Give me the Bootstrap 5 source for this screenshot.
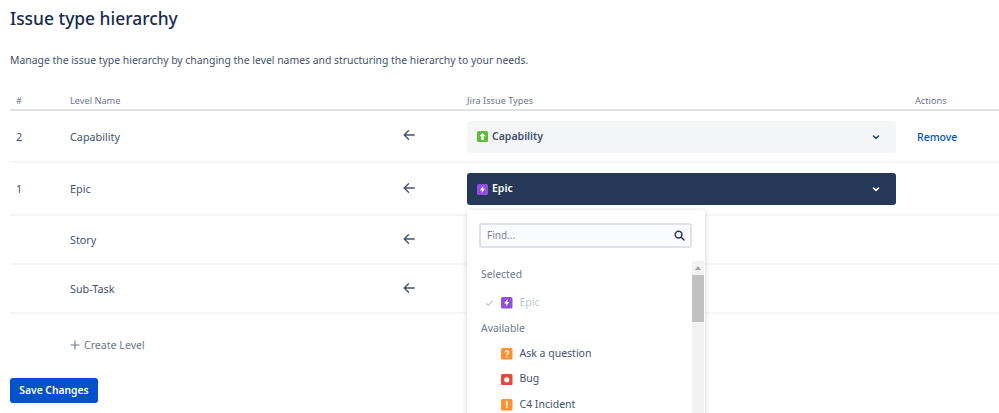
<!DOCTYPE html>
<html lang="en">
<head>
<meta charset="utf-8">
<title>Issue type hierarchy</title>
<link href="https://cdn.jsdelivr.net/npm/bootstrap@5.3.0/dist/css/bootstrap.min.css" rel="stylesheet">
<style>
html,body{height:413px;overflow:hidden;background:#fff}
body{font-family:"Noto Sans","Open Sans","Liberation Sans",sans-serif;font-size:10.5px;color:#42526e}
.page-wrap{padding:0 0 0 10px;position:relative;height:413px;overflow:hidden}
.page-title{font-size:17.4px;font-weight:500;color:#172b4d;line-height:24px;margin:0;padding-top:6px}
.page-desc{font-size:10.4px;line-height:16px;color:#42526e;margin:0;padding-top:22px}
.hier-table{table-layout:fixed;width:989px;margin:18px 0 0;border-collapse:collapse}
.hier-table th{font-size:9.2px;font-weight:400;color:#6b778c;height:24px;padding:6px 0 0;border-bottom:2px solid #dfe1e6;vertical-align:middle}
.hier-table td{padding:1px 0 0;border-bottom:2px solid #f4f5f7;vertical-align:middle;color:#42526e;font-size:10.8px}
.hier-table td,.hier-table th{background:transparent}
.hier-table td.text-low{padding-top:3px}
.col-num{padding-left:6px!important}
.r-a{height:52px}.r-b{height:53px}.r-c{height:49px}.r-d{height:49px}
.arrow-wrap{display:flex;justify-content:center;margin-bottom:3px}
.type-sel{display:flex;align-items:center;width:429px;height:32px;border-radius:3px;background:#f4f5f7;color:#42526e;font-weight:600;font-size:10.5px;padding:0 15px 0 10px;gap:4px}
.type-sel.is-open{background:#253858;color:#fff}
.remove-link{color:#0052cc;text-decoration:none;font-weight:500;font-size:10.5px;margin-left:2px}
.ico{width:11px;height:11px;flex:none;display:block}
.menu-opt .ico{width:11.5px;height:11.5px}
.create-row{display:flex;align-items:center;gap:4px;margin:23px 0 0 60px;color:#6b778c;font-size:10.6px;line-height:16px}
.save-btn{display:block;margin-top:25px;background:#0052cc;border:0;color:#fff;font-weight:600;font-size:10.3px;width:88px;height:25px;padding:0;border-radius:3px}
.type-menu{position:absolute;left:466.5px;top:210px;width:238.5px;height:240px;background:#fff;border-radius:3px;box-shadow:0 1px 5px rgba(9,30,66,.22);padding:13px 0 0}
.find-box{display:flex;align-items:center;justify-content:space-between;margin:0 13px 0 12.5px;height:25px;border:2px solid #dfe1e6;border-radius:3px;padding:0 5px 0 6px;background:#fafbfc;color:#7a869a;font-size:10px}
.menu-body{position:relative;height:190px;margin-top:13px;padding:5px 12px 0 0}
.menu-track{position:absolute;right:1px;top:0;width:12px;height:100%;background:#f1f1f1}
.menu-thumb{position:absolute;left:0;top:14px;width:100%;height:47px;background:#c1c1c1}
.menu-caret{position:absolute;left:3px;top:5px;width:0;height:0;border:3px solid transparent;border-bottom:4px solid #a3a3a3;border-top:0}
.menu-head{color:#6b778c;font-size:10.4px;line-height:16px;padding-left:14.5px}
.menu-head.avail-head{margin-bottom:5px}
.menu-opt{display:flex;align-items:center;height:25.5px;padding-left:34.5px;gap:7px;color:#42526e;font-size:10.5px}
.menu-opt.is-sel{color:#c1c7d0;position:relative;height:26px;margin:8px 0 4px}
.sel-check{position:absolute;left:18.5px;top:9px}
</style>
</head>
<body>
<div class="page-wrap">
  <h1 class="page-title">Issue type hierarchy</h1>
  <p class="page-desc">Manage the issue type hierarchy by changing the level names and structuring the hierarchy to your needs.</p>

  <table class="table hier-table">
    <colgroup><col style="width:60px"><col style="width:310px"><col style="width:58px"><col style="width:29px"><col style="width:448px"><col></colgroup>
    <thead>
      <tr><th class="col-num">#</th><th>Level Name</th><th></th><th></th><th>Jira Issue Types</th><th>Actions</th></tr>
    </thead>
    <tbody>
      <tr class="r-a">
        <td class="col-num text-low">2</td><td class="text-low">Capability</td>
        <td><div class="arrow-wrap"><svg width="12" height="12" viewBox="0 0 12 12" fill="none" stroke="#42526e" stroke-width="1.4" stroke-linecap="round" stroke-linejoin="round"><path d="M1.2 6h10M5.5 1.8 1.2 6l4.3 4.2"/></svg></div></td><td></td>
        <td><div class="type-sel"><svg class="ico" viewBox="0 0 11 11"><rect width="11" height="11" rx="1.5" fill="#63ba3c"/><path d="M5.5 2 2.5 5.3h1.8V9h2.4V5.3h1.8z" fill="#fff"/></svg><span class="flex-grow-1">Capability</span><svg width="10" height="10" viewBox="0 0 10 10" fill="none" stroke="#344563" stroke-width="1.6" stroke-linecap="round" stroke-linejoin="round"><path d="M2.5 4 5 6.3 7.5 4"/></svg></div></td>
        <td class="text-low"><a class="remove-link" href="#">Remove</a></td>
      </tr>
      <tr class="r-b">
        <td class="col-num">1</td><td>Epic</td>
        <td><div class="arrow-wrap"><svg width="12" height="12" viewBox="0 0 12 12" fill="none" stroke="#42526e" stroke-width="1.4" stroke-linecap="round" stroke-linejoin="round"><path d="M1.2 6h10M5.5 1.8 1.2 6l4.3 4.2"/></svg></div></td><td></td>
        <td><div class="type-sel is-open"><svg class="ico" viewBox="0 0 11 11"><rect width="11" height="11" rx="1.5" fill="#904ee2"/><path d="M6.2 2 3 6.2h2L4.6 9 8 4.8H6z" fill="#fff"/></svg><span class="flex-grow-1">Epic</span><svg width="10" height="10" viewBox="0 0 10 10" fill="none" stroke="#fff" stroke-width="1.6" stroke-linecap="round" stroke-linejoin="round"><path d="M2.5 4 5 6.3 7.5 4"/></svg></div></td>
        <td></td>
      </tr>
      <tr class="r-c">
        <td></td><td>Story</td>
        <td><div class="arrow-wrap"><svg width="12" height="12" viewBox="0 0 12 12" fill="none" stroke="#42526e" stroke-width="1.4" stroke-linecap="round" stroke-linejoin="round"><path d="M1.2 6h10M5.5 1.8 1.2 6l4.3 4.2"/></svg></div></td><td></td><td></td><td></td>
      </tr>
      <tr class="r-d">
        <td></td><td>Sub-Task</td>
        <td><div class="arrow-wrap"><svg width="12" height="12" viewBox="0 0 12 12" fill="none" stroke="#42526e" stroke-width="1.4" stroke-linecap="round" stroke-linejoin="round"><path d="M1.2 6h10M5.5 1.8 1.2 6l4.3 4.2"/></svg></div></td><td></td><td></td><td></td>
      </tr>
    </tbody>
  </table>

  <div class="create-row"><svg width="10" height="10" viewBox="0 0 10 10" fill="none" stroke="#6b778c" stroke-width="1.1"><path d="M5 .5v9M.5 5h9"/></svg><span>Create Level</span></div>
  <button type="button" class="btn save-btn">Save Changes</button>

  <div class="type-menu">
    <div class="find-box"><span>Find...</span><svg width="11" height="11" viewBox="0 0 11 11" fill="none" stroke="#253858" stroke-width="1.5" stroke-linecap="round"><circle cx="4.6" cy="4.6" r="3.4"/><path d="m7.3 7.3 2.6 2.6"/></svg></div>
    <div class="menu-body">
      <div class="menu-track"><div class="menu-caret"></div><div class="menu-thumb"></div></div>
      <div class="menu-head">Selected</div>
      <div class="menu-opt is-sel"><svg class="sel-check" width="9" height="8" viewBox="0 0 9 8" fill="none" stroke="#c1c7d0" stroke-width="1.2"><path d="m1 4.2 2.3 2.3L8 1.5"/></svg><svg class="ico" viewBox="0 0 11 11"><rect width="11" height="11" rx="1.5" fill="#904ee2"/><path d="M6.2 2 3 6.2h2L4.6 9 8 4.8H6z" fill="#fff"/></svg><span>Epic</span></div>
      <div class="menu-head avail-head">Available</div>
      <div class="menu-opt"><svg class="ico" viewBox="0 0 11 11"><rect width="11" height="11" rx="1.5" fill="#ff8f33"/><path d="M3.9 4.2c0-2.1 3.3-2.1 3.3-.1 0 1.3-1.6 1.3-1.6 2.6" fill="none" stroke="#fff" stroke-width="1.2"/><rect x="5" y="7.6" width="1.2" height="1.3" fill="#fff"/></svg><span>Ask a question</span></div>
      <div class="menu-opt"><svg class="ico" viewBox="0 0 11 11"><rect width="11" height="11" rx="1.5" fill="#e5493a"/><circle cx="5.5" cy="5.5" r="2.5" fill="#fff"/></svg><span>Bug</span></div>
      <div class="menu-opt"><svg class="ico" viewBox="0 0 11 11"><rect width="11" height="11" rx="1.5" fill="#ff8f33"/><rect x="4.7" y="2" width="1.6" height="4.6" fill="#fff"/><rect x="4.7" y="7.5" width="1.6" height="1.5" fill="#fff"/></svg><span>C4 Incident</span></div>
    </div>
  </div>
</div>
<script src="https://cdn.jsdelivr.net/npm/bootstrap@5.3.0/dist/js/bootstrap.bundle.min.js"></script>
</body>
</html>
